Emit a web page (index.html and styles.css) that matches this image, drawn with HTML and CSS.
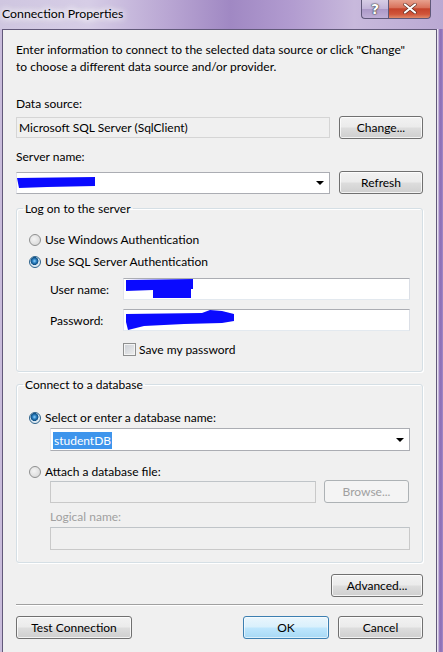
FILE: index.html
```html
<!DOCTYPE html>
<html>
<head>
<meta charset="utf-8">
<link rel="stylesheet" href="styles.css">
</head>
<body>
<div class="window">
  <div class="titlebar">
    <span class="title">Connection Properties</span>
    <div class="caption-btns">
      <div class="cbtn help">?</div>
      <div class="cbtn close">
        <svg width="14" height="11" viewBox="0 0 14 11"><path d="M2 1.5 L12 9.5 M12 1.5 L2 9.5" stroke="#5a2a20" stroke-width="3.4" stroke-linecap="round"/><path d="M2 1.5 L12 9.5 M12 1.5 L2 9.5" stroke="#fff" stroke-width="2.2" stroke-linecap="round"/></svg>
      </div>
    </div>
  </div>
  <div class="frame">
    <div class="client">
      <p class="intro">Enter information to connect to the selected data source or click "Change"<br>to choose a different data source and/or provider.</p>

      <div class="label lbl-ds">Data source:</div>
      <div class="row row-ds">
        <div class="field readonly">Microsoft SQL Server (SqlClient)</div>
        <button class="btn btn-side">Change...</button>
      </div>

      <div class="label lbl-server">Server name:</div>
      <div class="row row-server">
        <div class="field combo">
          <svg class="redact redact-server" width="82" height="12" viewBox="0 0 82 12"><path d="M0 1 L78 0 L78 9 L30 10 L2 11 Z" fill="#0a0aff"/></svg>
          <span class="arrow"></span>
        </div>
        <button class="btn btn-side">Refresh</button>
      </div>

      <fieldset class="group group-logon">
        <legend>Log on to the server</legend>
        <div class="opt opt-first"><span class="radio"></span>Use Windows Authentication</div>
        <div class="opt opt-second"><span class="radio checked"></span>Use SQL Server Authentication</div>
        <div class="cred cred-user">
          <span class="cred-label">User name:</span>
          <div class="field input">
            <svg class="redact" width="72" height="20" viewBox="0 0 72 20"><path d="M2 1 L69 0 L69 10 L67 10 L67 19 L29 19 L29 11 L2 12 Z" fill="#0a0aff"/></svg>
          </div>
        </div>
        <div class="cred cred-pass">
          <span class="cred-label">Password:</span>
          <div class="field input">
            <svg class="redact" width="112" height="21" viewBox="0 0 112 21"><path d="M2 4 L78 3 L86 0 L98 1 L110 4 L110 11 L98 13 L60 14 L20 16 L4 20 L2 12 Z" fill="#0a0aff"/></svg>
          </div>
        </div>
        <div class="save"><span class="check"></span>Save my password</div>
      </fieldset>

      <fieldset class="group group-db">
        <legend>Connect to a database</legend>
        <div class="opt opt-first"><span class="radio checked"></span>Select or enter a database name:</div>
        <div class="field combo dbcombo"><span class="sel">studentDB</span><span class="arrow"></span></div>
        <div class="opt opt-attach"><span class="radio"></span>Attach a database file:</div>
        <div class="attach-row">
          <div class="field disabled"></div>
          <button class="btn btn-disabled">Browse...</button>
        </div>
        <div class="logical">Logical name:</div>
        <div class="field disabled logical-field"></div>
      </fieldset>

      <div class="adv-row"><button class="btn btn-adv">Advanced...</button></div>
      <div class="separator"></div>
      <div class="bottom-row">
        <button class="btn btn-test">Test Connection</button>
        <div class="spacer"></div>
        <button class="btn btn-ok">OK</button>
        <button class="btn btn-cancel">Cancel</button>
      </div>
    </div>
    <div class="rframe"></div>
  </div>
</div>
</body>
</html>
```
FILE: styles.css
```css
* { box-sizing: border-box; }
html, body { margin: 0; padding: 0; }
body {
  width: 443px;
  height: 652px;
  overflow: hidden;
  font-family: Lato, "Noto Sans", sans-serif;
  font-size: 12px;
  color: #000;
  background: #b9a7d2;
}
.window {
  display: flex;
  flex-direction: column;
  width: 443px;
  height: 652px;
}
.titlebar {
  height: 29px;
  flex: none;
  display: flex;
  justify-content: space-between;
  align-items: flex-start;
  background: linear-gradient(90deg, #cfc6e0 0%, #d6cde6 20%, #b9a6d3 38%, #a088c3 52%, #b29cd0 66%, #c8b9dc 80%, #baa9d3 100%);
}
.title {
  font-size: 12.3px;
  line-height: 17px;
  padding: 5px 0 0 2px;
  color: #000;
  text-shadow: 0 0 6px #fff, 0 0 8px #fff, 0 0 10px #fff;
}
.caption-btns {
  display: flex;
  margin-right: 12px;
  margin-top: -1px;
}
.cbtn {
  height: 20px;
  border: 1px solid #5f5878;
  border-top: none;
  display: flex;
  align-items: center;
  justify-content: center;
}
.help {
  width: 27px;
  border-right: none;
  border-radius: 0 0 0 4px;
  background: linear-gradient(180deg, #d9d0e6 0%, #c3b5d9 50%, #aa97c6 51%, #bfaed6 100%);
  color: #fff;
  font-weight: bold;
  font-size: 14px;
  font-family: "DejaVu Sans", sans-serif;
  text-shadow: 0 0 1px #333, 0 0 1px #333, 0 0 2px #555;
}
.close {
  width: 43px;
  border-radius: 0 0 4px 0;
  background: linear-gradient(180deg, #e9a795 0%, #d9735c 45%, #c5432b 52%, #d0553a 80%, #e08a6a 100%);
}
.frame {
  flex: 1;
  display: flex;
  padding-left: 2px;
  background: #c9bcdb;
}
.client {
  width: 435px;
  flex: none;
  background: #f0f0f0;
  border: 1px solid #62597a;
  border-bottom: none;
  padding: 0 13px 0 13px;
  display: flex;
  flex-direction: column;
}
.rframe {
  flex: 1;
  background: linear-gradient(90deg, #e9e3f1 0px, #e9e3f1 1px, #9b80c2 2px, #8a6db4 4px, #a58cc9 6px);
}
.intro {
  margin: 11px 0 0 0;
  line-height: 17px;
  white-space: nowrap;
}
.label { line-height: 17px; }
.lbl-ds { margin-top: 20px; }
.lbl-server { margin-top: 9px; }
.row {
  display: flex;
  align-items: center;
  gap: 9px;
}
.row-ds { margin-top: 4px; }
.row-server { margin-top: 6px; }
.field {
  position: relative;
  height: 22px;
  border: 1px solid #abadb3;
  border-left-color: #e2e3ea;
  border-right-color: #dbdfe6;
  border-bottom-color: #e3e9ef;
  background: #fff;
  line-height: 20px;
  padding-left: 2px;
}
.row .field { flex: 1; }
.readonly {
  background: #f0f0f0;
  border-color: #d5d5d5;
  height: 21px;
  line-height: 19px;
}
.combo {
  border-color: #abadb3;
  border-left-color: #e2e3ea;
}
.arrow {
  position: absolute;
  right: 5px;
  top: 8px;
  width: 0;
  height: 0;
  border-left: 4px solid transparent;
  border-right: 4px solid transparent;
  border-top: 4px solid #000;
}
.redact {
  position: absolute;
  left: 0;
  top: 0;
}
.redact-server { top: 4px; }
.btn {
  font-family: inherit;
  font-size: 12px;
  color: #000;
  height: 23px;
  padding: 0;
  border: 1px solid #707070;
  border-radius: 3px;
  background: linear-gradient(180deg, #f2f2f2 0%, #ebebeb 48%, #dddddd 52%, #cfcfcf 100%);
  box-shadow: inset 0 0 0 1px rgba(255,255,255,0.75);
  flex: none;
}
.btn-side { width: 84px; }
.group {
  border: 1px solid #d5dfe5;
  border-radius: 3px;
  margin: 0;
  padding: 0 12px;
  box-shadow: inset 1px 1px 0 #fff, 1px 1px 0 #fff;
}
.group legend {
  padding: 0 2px;
  margin-left: -6px;
  line-height: 17px;
}
.group-logon { margin-top: 6px; padding-bottom: 13px; }
.group-db { margin-top: 4px; padding-bottom: 12px; }
.opt {
  display: flex;
  align-items: center;
  line-height: 17px;
}
.opt-first { margin-top: 14px; }
.group-db .opt-first { margin-top: 16px; }
.opt-second { margin-top: 5px; }
.opt-attach { margin-top: 12px; }
.radio {
  width: 12px;
  height: 12px;
  border-radius: 50%;
  border: 1px solid #8e8f8f;
  background: radial-gradient(circle at 40% 40%, #f4f4f4 0%, #e0e0e0 60%, #cfcfcf 100%);
  margin-right: 4px;
  flex: none;
  position: relative;
}
.radio.checked {
  border-color: #2c628b;
  background: radial-gradient(circle at 45% 40%, #8fd4ff 0%, #2b7dbd 25%, #0e4f84 45%, #d8e6f0 52%, #eef3f7 100%);
}
.cred {
  display: flex;
  align-items: center;
  margin-left: 21px;
}
.cred-user { margin-top: 8px; }
.cred-pass { margin-top: 9px; }
.cred-label { width: 73px; flex: none; }
.cred .field { flex: 1; }
.save {
  display: flex;
  align-items: center;
  margin-left: 94px;
  margin-top: 10px;
  line-height: 17px;
}
.check {
  width: 13px;
  height: 13px;
  border: 1px solid #8e8f8f;
  background: linear-gradient(135deg, #cbcfd5 0%, #eeeeee 100%);
  box-shadow: inset 0 0 0 1px #f4f4f4;
  margin-right: 3px;
  flex: none;
}
.dbcombo { margin: 2px 0 0 21px; height: 23px; line-height: 21px; }
.sel {
  background: #3e95ec;
  color: #fff;
  padding: 0 1px;
  line-height: 17px;
  display: inline-block;
  vertical-align: middle;
}
.dbcombo .arrow { top: 9px; }
.attach-row {
  display: flex;
  gap: 8px;
  align-items: center;
  margin: 0 1px 0 21px;
}
.attach-row .field { flex: 1; height: 22px; }
.disabled {
  background: #f0f0f0;
  border: 1px solid #c9c9c9;
  border-top-color: #bfc4c8;
}
.btn-disabled {
  width: 85px;
  color: #a0a0a0;
  border-color: #adb2b5;
  background: #f4f4f4;
  box-shadow: none;
}
.logical {
  margin: 5px 0 0 21px;
  line-height: 17px;
  color: #a0a0a0;
}
.logical-field { margin: 2px 0 0 21px; height: 23px; }
.adv-row {
  display: flex;
  justify-content: flex-end;
  margin-top: 11px;
}
.btn-adv { width: 92px; }
.separator {
  margin-top: 7px;
  height: 2px;
  border-top: 1px solid #a0a0a0;
  border-bottom: 1px solid #fff;
}
.bottom-row {
  display: flex;
  gap: 9px;
  margin-top: 10px;
}
.spacer { flex: 1; }
.btn-test { width: 116px; }
.btn-ok {
  width: 86px;
  border-color: #3c7fb1;
  background: linear-gradient(180deg, #eaf6fd 0%, #d9f0fc 48%, #bee6fd 52%, #a7d9f5 100%);
  box-shadow: inset 0 0 0 1px rgba(255,255,255,0.6);
}
.btn-cancel { width: 85px; }
```
